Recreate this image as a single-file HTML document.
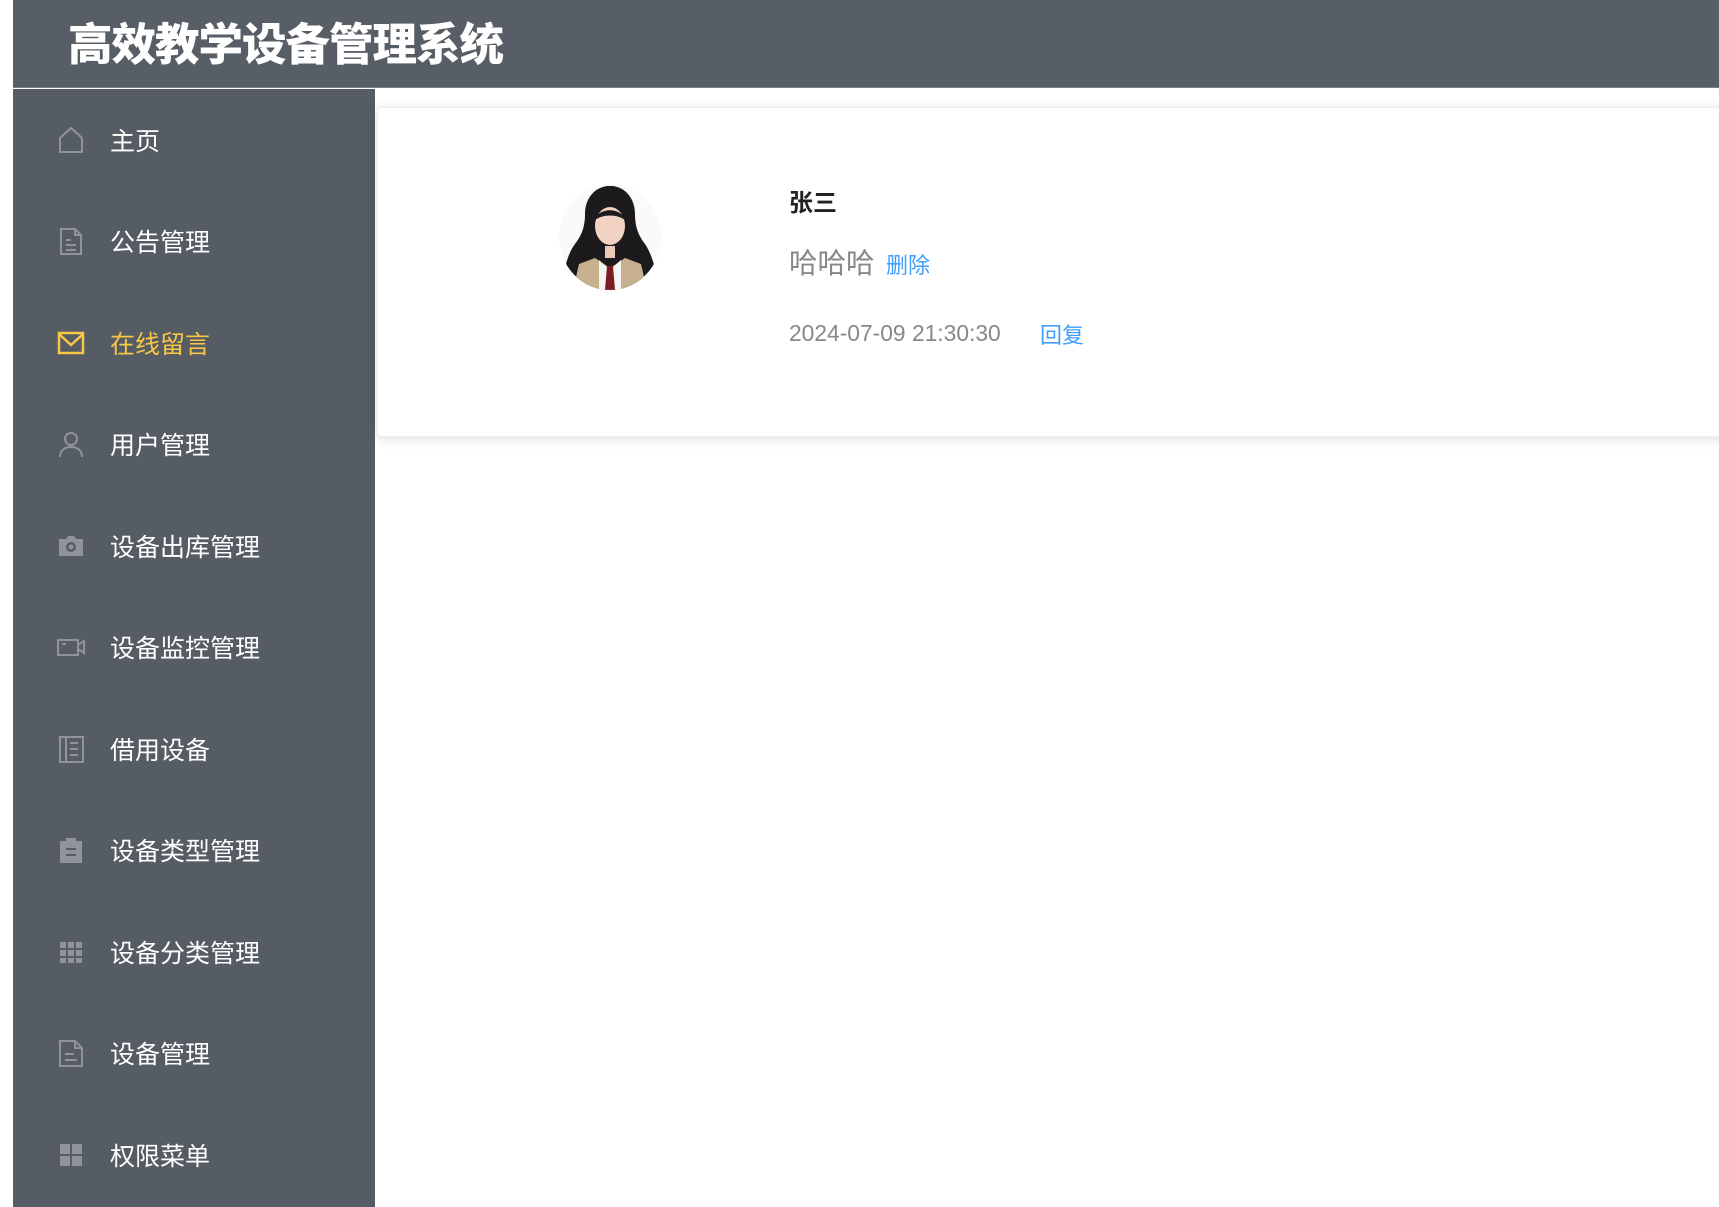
<!DOCTYPE html>
<html><head><meta charset="utf-8"><style>
*{margin:0;padding:0;box-sizing:border-box}
body{width:1719px;height:1207px;background:#fff;position:relative;overflow:hidden;font-family:"Liberation Sans","Noto Sans CJK SC",sans-serif}
.hdr{position:absolute;left:13px;top:0;width:1706px;height:88px;background:#575e66;border-bottom:1px solid #7a8088}
.hdr h1{position:absolute;left:55px;top:19px;font-size:44.5px;color:#fff;font-weight:900;letter-spacing:-1px;line-height:54px}
.side{position:absolute;left:13px;top:89px;width:362px;height:1118px;background:#555c64}
.item{position:absolute;left:0;width:362px;height:60px;display:flex;align-items:center}
.item svg{position:absolute;left:43px;width:30px;height:30px}
.item span{position:absolute;left:97px;font-size:25px;color:#fff}
.item.act span{color:#f7c745}
.card{position:absolute;left:377px;top:107px;width:1360px;height:330px;background:#fff;border-radius:4px;box-shadow:0 2px 12px rgba(0,0,0,.12);border:1px solid #eee}
.av{position:absolute;left:557px;top:184px}
.t{position:absolute;white-space:nowrap}
</style></head><body>
<div class="hdr"><h1>高效教学设备管理系统</h1></div>
<div class="side">
<div class="item" style="top:21px"><svg viewBox="0 0 30 30" fill="none" stroke="#909399" stroke-width="2"><path d="M4 27V13L15 3l11 10v14z"/></svg><span>主页</span></div>
<div class="item" style="top:122px"><svg viewBox="0 0 30 30" fill="none" stroke="#909399" stroke-width="2"><path d="M5 3h14l6 6v19H5z M19 3v6h6 M10 14h5 M10 19h10 M10 24h10"/></svg><span>公告管理</span></div>
<div class="item act" style="top:224px"><svg viewBox="0 0 30 30" fill="none" stroke="#f7c745" stroke-width="2.5"><path d="M3 5h24v20H3z M3 6l12 11 12-11"/></svg><span>在线留言</span></div>
<div class="item" style="top:325px"><svg viewBox="0 0 30 30" fill="none" stroke="#909399" stroke-width="2"><circle cx="15" cy="10" r="6"/><path d="M4 28c0-7 5-10 11-10s11 3 11 10"/></svg><span>用户管理</span></div>
<div class="item" style="top:427px"><svg viewBox="0 0 30 30"><path d="M3 8h7l2-3h6l2 3h7v17H3z" fill="#909399"/><circle cx="15" cy="16" r="5" fill="#555c64"/><circle cx="15" cy="16" r="2.5" fill="#909399"/></svg><span>设备出库管理</span></div>
<div class="item" style="top:528px"><svg viewBox="0 0 30 30" fill="none" stroke="#909399" stroke-width="2"><path d="M2 8h20v15H2z M22 13l6-4v12l-6-4 M6 12h4"/></svg><span>设备监控管理</span></div>
<div class="item" style="top:630px"><svg viewBox="0 0 30 30" fill="none" stroke="#909399" stroke-width="2"><path d="M4 3h23v25H4z M10 3v25 M14 9h8 M14 15h8 M14 21h8"/></svg><span>借用设备</span></div>
<div class="item" style="top:731px"><svg viewBox="0 0 30 30"><path d="M4 6h22v22H4z M10 3h10v5H10z" fill="#909399"/><path d="M10 14h10M10 20h10" stroke="#555c64" stroke-width="2"/></svg><span>设备类型管理</span></div>
<div class="item" style="top:833px"><svg viewBox="0 0 30 30" fill="#909399"><rect x="4" y="5" width="6" height="6"/><rect x="12" y="5" width="6" height="6"/><rect x="20" y="5" width="6" height="6"/><rect x="4" y="13" width="6" height="6"/><rect x="12" y="13" width="6" height="6"/><rect x="20" y="13" width="6" height="6"/><rect x="4" y="21" width="6" height="5"/><rect x="12" y="21" width="6" height="5"/><rect x="20" y="21" width="6" height="5"/></svg><span>设备分类管理</span></div>
<div class="item" style="top:934px"><svg viewBox="0 0 30 30" fill="none" stroke="#909399" stroke-width="2"><path d="M4 3h15l7 7v18H4z M19 3v7h7 M9 16h9 M9 22h12"/></svg><span>设备管理</span></div>
<div class="item" style="top:1036px"><svg viewBox="0 0 30 30" fill="#909399"><rect x="4" y="4" width="10" height="10"/><rect x="16" y="4" width="10" height="10"/><rect x="4" y="16" width="10" height="10"/><rect x="16" y="16" width="10" height="10"/></svg><span>权限菜单</span></div>
</div>
<div class="card"></div>
<svg class="av" width="106" height="106" viewBox="0 0 106 106"><defs><clipPath id="c"><ellipse cx="53" cy="53" rx="51" ry="53"/></clipPath></defs><g clip-path="url(#c)"><rect width="106" height="106" fill="#fbfaf8"/><path d="M50 2c-14 2-22 14-22 28 0 14-4 22-10 30-8 10-12 30-14 46h98c-2-16-6-34-14-46-6-8-10-16-10-30 0-14-8-26-22-28z" fill="#1c1a1c"/><path d="M22 80l16-6 15 10 15-10 16 6 6 26H16z" fill="#c7b08e"/><path d="M42 76l11 10 11-10 0 30H42z" fill="#f4f4f4"/><path d="M50 82h6l2 24h-10z" fill="#7a1c24"/><ellipse cx="53" cy="42" rx="15" ry="19" fill="#f2d2c2"/><path d="M38 36c2-12 26-14 30 0-8-6-22-6-30 0z" fill="#1c1a1c"/><path d="M48 62h10v12H48z" fill="#ecc8b6"/></g></svg>
<div class="t" style="left:789px;top:183px;font-size:24px;font-weight:bold;color:#222">张三</div>
<div class="t" style="left:789px;top:241px;font-size:28.5px;color:#888">哈哈哈</div>
<div class="t" style="left:886px;top:248px;font-size:22px;color:#409eff">删除</div>
<div class="t" style="left:789px;top:320px;font-size:22.8px;color:#888">2024-07-09 21:30:30</div>
<div class="t" style="left:1040px;top:318px;font-size:22px;color:#409eff">回复</div>
</body></html>
